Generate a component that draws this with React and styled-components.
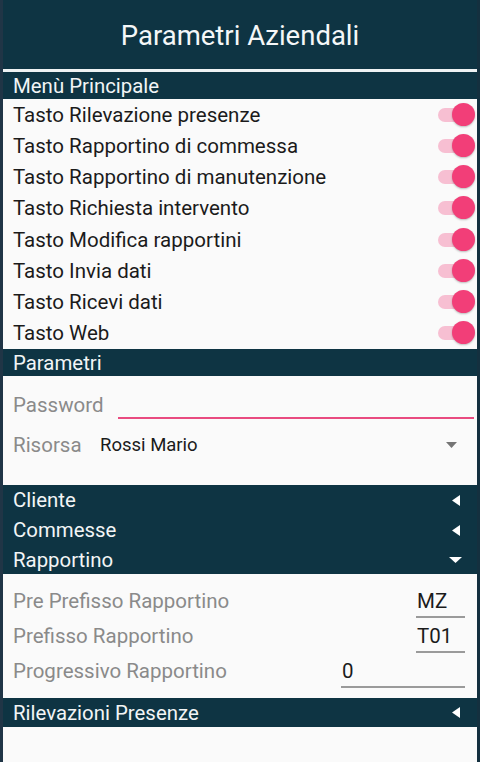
import React from 'react';
import styled, { createGlobalStyle } from 'styled-components';

const GlobalStyle = createGlobalStyle`
  html, body {
    margin: 0;
    padding: 0;
    background: #0e3443;
  }
  body {
    font-family: Roboto, "Noto Sans", Arial, sans-serif;
  }
`;

const toggles = [
  'Tasto Rilevazione presenze',
  'Tasto Rapportino di commessa',
  'Tasto Rapportino di manutenzione',
  'Tasto Richiesta intervento',
  'Tasto Modifica rapportini',
  'Tasto Invia dati',
  'Tasto Ricevi dati',
  'Tasto Web',
];

const rapportinoFields = [
  { label: 'Pre Prefisso Rapportino', value: 'MZ', width: 49 },
  { label: 'Prefisso Rapportino', value: 'T01', width: 49 },
  { label: 'Progressivo Rapportino', value: '0', width: 124 },
];

export default function App() {
  return (
    <>
      <GlobalStyle />
      <Screen>
        <TopBar>Parametri Aziendali</TopBar>
        <Divider />

        <SectionBar $h={27}>Menù Principale</SectionBar>
        <ToggleList>
          {toggles.map((t) => (
            <ToggleRow key={t}>
              <span>{t}</span>
              <Switch>
                <span className='track' />
                <span className='thumb' />
              </Switch>
            </ToggleRow>
          ))}
        </ToggleList>

        <SectionBar $h={27}>Parametri</SectionBar>
        <ParamBlock>
          <PasswordRow>
            <Label $w={105}>Password</Label>
            <PinkInput />
          </PasswordRow>
          <ResourceRow>
            <Label $w={87}>Risorsa</Label>
            <Value>Rossi Mario</Value>
            <DropArrow width="11" height="6" viewBox="0 0 11 6">
              <polygon points="0,0 11,0 5.5,6" fill="#757575" />
            </DropArrow>
          </ResourceRow>
        </ParamBlock>

        <Group>
          <SectionBar $h={30}>
            Cliente
            <ArrowLeft />
          </SectionBar>
          <SectionBar $h={30}>
            Commesse
            <ArrowLeft />
          </SectionBar>
          <SectionBar $h={29}>
            Rapportino
            <ArrowDown />
          </SectionBar>
        </Group>

        <FieldBlock>
          {rapportinoFields.map((f) => (
            <FieldRow key={f.label}>
              <Label>{f.label}</Label>
              <LineInput $w={f.width}>{f.value}</LineInput>
            </FieldRow>
          ))}
        </FieldBlock>

        <SectionBar $h={29}>
          Rilevazioni Presenze
          <ArrowLeft />
        </SectionBar>
        <Filler />
      </Screen>
    </>
  );
}

function ArrowLeft() {
  return (
    <Arrow width="8" height="11" viewBox="0 0 8 11">
      <polygon points="8,0 8,11 0,5.5" fill="#ffffff" />
    </Arrow>
  );
}

function ArrowDown() {
  return (
    <Arrow width="13" height="6" viewBox="0 0 13 6" $down>
      <polygon points="0,0 13,0 6.5,6" fill="#ffffff" />
    </Arrow>
  );
}

const Screen = styled.div`
  width: 480px;
  height: 762px;
  box-sizing: border-box;
  border-left: 3px solid #203546;
  border-right: 3px solid #14303f;
  background: #fafafa;
  display: flex;
  flex-direction: column;
  overflow: hidden;
`;

const TopBar = styled.div`
  height: 69px;
  margin: 0 -3px;
  background: #0e3443;
  color: #f4f7f8;
  font-size: 27.5px;
  display: flex;
  align-items: center;
  justify-content: center;
  padding-top: 2px;
  box-sizing: border-box;
`;

const Divider = styled.div`
  height: 3px;
  background: #eef2f3;
`;

const SectionBar = styled.div`
  height: ${(p) => p.$h}px;
  flex-shrink: 0;
  background: #0e3443;
  color: #f2f5f6;
  font-size: 20.4px;
  display: flex;
  align-items: center;
  justify-content: space-between;
  padding: 0 17px 0 10px;
  box-sizing: border-box;
`;

const Arrow = styled.svg`
  display: block;
  margin-right: ${(p) => (p.$down ? '-2px' : '0')};
`;

const ToggleList = styled.div`
  display: flex;
  flex-direction: column;
`;

const ToggleRow = styled.div`
  height: 31.25px;
  display: flex;
  align-items: center;
  justify-content: space-between;
  padding: 0 2px 0 10px;
  font-size: 20.5px;
  color: #1b1b1b;
`;

const Switch = styled.span`
  position: relative;
  width: 37px;
  height: 24px;
  display: block;

  .track {
    position: absolute;
    left: 0;
    top: 5px;
    width: 32px;
    height: 14px;
    border-radius: 7px;
    background: #f7bfd2;
  }

  .thumb {
    position: absolute;
    right: 0;
    top: 0;
    width: 23px;
    height: 23px;
    border-radius: 50%;
    background: #f23e78;
    box-shadow: 0 1px 2px rgba(0, 0, 0, 0.25);
  }
`;

const ParamBlock = styled.div`
  height: 109px;
  flex-shrink: 0;
  box-sizing: border-box;
  padding: 17px 3px 0 10px;
  display: flex;
  flex-direction: column;
`;

const Label = styled.span`
  width: ${(p) => (p.$w ? `${p.$w}px` : 'auto')};
  flex-shrink: 0;
  font-size: 20.5px;
  line-height: 24px;
  color: #8a8a8a;
`;

const PasswordRow = styled.div`
  display: flex;
  align-items: flex-start;
  height: 26px;
`;

const PinkInput = styled.div`
  flex: 1;
  height: 24px;
  border-bottom: 2px solid #e94b80;
`;

const ResourceRow = styled.div`
  display: flex;
  align-items: center;
  height: 26px;
  margin-top: 13px;
`;

const Value = styled.span`
  flex: 1;
  font-size: 18.5px;
  color: #1b1b1b;
`;

const DropArrow = styled.svg`
  display: block;
  margin-right: 17px;
`;

const Group = styled.div`
  display: flex;
  flex-direction: column;
  flex-shrink: 0;
`;

const FieldBlock = styled.div`
  height: 124px;
  flex-shrink: 0;
  box-sizing: border-box;
  padding: 9px 12px 10px 10px;
  display: flex;
  flex-direction: column;
`;

const FieldRow = styled.div`
  height: 35px;
  display: flex;
  align-items: center;
  justify-content: space-between;
`;

const LineInput = styled.div`
  align-self: flex-end;
  width: ${(p) => p.$w}px;
  height: 32px;
  line-height: 30px;
  box-sizing: border-box;
  padding-left: 1px;
  border-bottom: 2px solid #9a9a9a;
  font-size: 20.5px;
  color: #1b1b1b;
`;

const Filler = styled.div`
  flex: 1;
  background: #fafafa;
`;
